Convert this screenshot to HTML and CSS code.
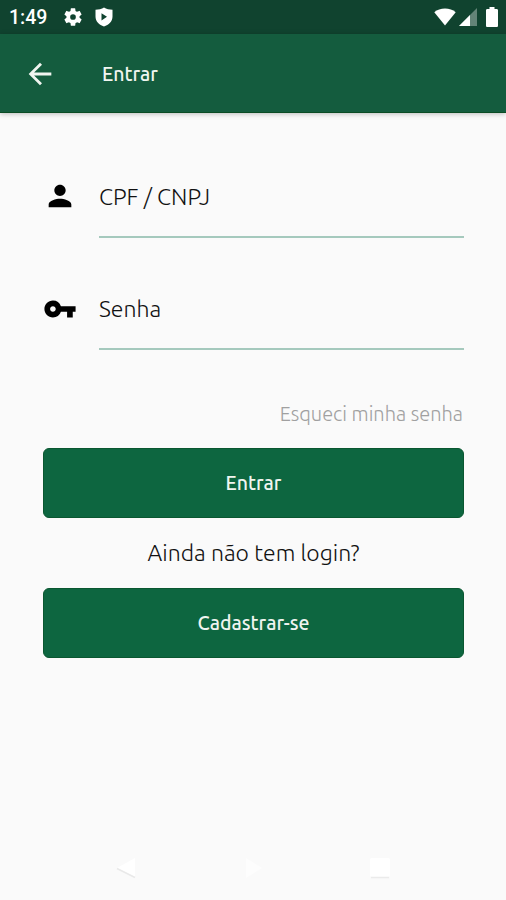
FILE: index.html
```html
<!DOCTYPE html>
<html lang="pt-BR">
<head>
  <meta charset="UTF-8">
  <meta name="viewport" content="width=device-width, initial-scale=1.0">
  <title>Entrar</title>
  <link rel="stylesheet" href="styles.css">
</head>
<body>
  <!-- Status bar -->
  <div class="status-bar">
    <span class="clock">1:49</span>
    <svg class="gear" width="22" height="22" viewBox="0 0 24 24"><path d="M19.14 12.94c.04-.3.06-.61.06-.94s-.02-.64-.07-.94l2.03-1.58a.49.49 0 0 0 .12-.61l-1.92-3.32a.49.49 0 0 0-.59-.22l-2.39.96a7 7 0 0 0-1.62-.94l-.36-2.54a.48.48 0 0 0-.48-.41h-3.84a.47.47 0 0 0-.47.41l-.36 2.54c-.59.24-1.13.57-1.62.94l-2.39-.96a.48.48 0 0 0-.59.22L2.74 8.87a.47.47 0 0 0 .12.61l2.03 1.58a6 6 0 0 0 0 1.88l-2.03 1.58a.49.49 0 0 0-.12.61l1.92 3.32c.12.22.37.29.59.22l2.39-.96c.5.38 1.03.7 1.62.94l.36 2.54c.05.24.24.41.48.41h3.84c.24 0 .44-.17.47-.41l.36-2.54c.59-.24 1.13-.56 1.62-.94l2.39.96c.22.08.47 0 .59-.22l1.92-3.32a.47.47 0 0 0-.12-.61zM12 15.1a3.1 3.1 0 1 1 0-6.2 3.1 3.1 0 0 1 0 6.2z"/></svg>
    <svg class="shield" width="18" height="20" viewBox="0 0 18 20"><path fill-rule="evenodd" d="M9 .5C6.700 2 3.500 2.700.5 2.700V9.500C.5 14.500 4.200 18 9 19.500c4.800-1.500 8.500-5 8.500-10V2.700C14.500 2.700 11.300 2 9 .5zM6.500 6.200l5.500 3.600-5.500 3.600z"/></svg>
    <div class="signals">
      <svg width="22" height="18" viewBox="0 0 22 18"><path d="M11 17.500.3 4.200C3 1.800 7 .5 11 .5s8 1.300 10.700 3.700z"/></svg>
      <svg class="cell" width="18" height="18" viewBox="0 0 18 18"><path d="M0 18 18 0v18z" opacity=".35"/><path d="M0 18 11 7v11z"/></svg>
      <svg class="battery" width="12" height="20" viewBox="0 0 12 20"><path d="M3.500 0h5v2h2.200c.7 0 1.300.6 1.300 1.300v15.400c0 .7-.6 1.300-1.300 1.300H1.300C.6 20 0 19.400 0 18.700V3.300C0 2.600.6 2 1.300 2h2.200z"/></svg>
    </div>
  </div>

  <!-- App bar -->
  <header class="app-bar">
    <svg class="back" width="34" height="34" viewBox="0 0 24 24"><path d="M20 11H7.830l5.590-5.590L12 4l-8 8 8 8 1.410-1.410L7.830 13H20z"/></svg>
    <h1>Entrar</h1>
  </header>

  <main class="login">
    <div class="field">
      <svg class="person" width="34" height="34" viewBox="0 0 24 24"><path d="M12 12c2.210 0 4-1.790 4-4s-1.790-4-4-4-4 1.790-4 4 1.790 4 4 4zm0 2c-2.670 0-8 1.340-8 4v2h16v-2c0-2.660-5.330-4-8-4z"/></svg>
      <div class="input">CPF / CNPJ</div>
    </div>
    <div class="field">
      <svg class="key" width="34" height="34" viewBox="0 0 24 24"><path d="M12.650 10A5.990 5.990 0 0 0 7 6c-3.310 0-6 2.690-6 6s2.690 6 6 6a5.990 5.990 0 0 0 5.650-4H17v4h4v-4h2v-4H12.650zM7 14c-1.100 0-2-.9-2-2s.9-2 2-2 2 .9 2 2-.9 2-2 2z"/></svg>
      <div class="input">Senha</div>
    </div>
    <a class="forgot">Esqueci minha senha</a>
    <button class="btn" type="button">Entrar</button>
    <p class="question">Ainda não tem login?</p>
    <button class="btn" type="button">Cadastrar-se</button>
  </main>

  <!-- System navigation -->
  <nav class="nav-bar">
    <svg width="22" height="24" viewBox="0 0 22 24"><path d="M20 2v19L2 12z" fill="#fff"/><path d="M2 12.500 20 21.500" stroke="#e9e9e9" stroke-width="1.500"/></svg>
    <svg width="22" height="24" viewBox="0 0 22 24"><path d="M4 2v20l16-10z" fill="#fdfdfd"/></svg>
    <svg width="22" height="24" viewBox="0 0 22 24"><rect x="1" y="2" width="20" height="19" rx="2" fill="#fff"/><path d="M2 21.500h18" stroke="#ebebeb" stroke-width="1.500"/></svg>
  </nav>
</body>
</html>
```
FILE: styles.css
```css
:root {
  --status: #10432f;
  --bar: #145c3e;
  --primary: #0d6640;
  --bg: #fafafa;
  --font-family: Ubuntu, "Noto Sans", sans-serif;
}
* { box-sizing: border-box; margin: 0; padding: 0; }
body { display: flex; flex-direction: column; height: 100vh; background-color: var(--bg); color: #111; font-family: var(--font-family); overflow: hidden; }
svg { display: block; flex: none; }

.status-bar { display: flex; align-items: center; flex: none; height: 34px; padding: 0 8px 0 9px; background-color: var(--status); color: #fff; fill: #fff; }
.clock { width: 53px; padding-top: 2px; font: 500 19.5px/34px Roboto, sans-serif; }
.shield { margin-left: 11px; }
.signals { display: flex; align-items: center; margin-left: auto; }
.cell { margin-left: 3px; margin-right: 9px; }

.app-bar { display: flex; align-items: center; flex: none; height: 79px; padding: 1px 0 0 23px; background-color: var(--bar); border-bottom: 1px solid #0b4c24; box-shadow: 0 1px 5px rgba(0,0,0,0.25); color: #f0f5f0; fill: #f0f5f0; }
.app-bar h1 { margin-left: 45px; font-size: 19.5px; font-weight: 500; }

.login { display: flex; flex-direction: column; flex: 1; padding: 45px 42px 0 43px; }
.field { display: flex; align-items: center; height: 80px; margin-bottom: 32px; fill: #000; }
.person { margin-bottom: 4px; }
.key { margin-bottom: 2px; }
.input { flex: 1; height: 80px; margin-left: 22px; border-bottom: 2px solid #a5c9bd; font-size: 23px; font-weight: 300; line-height: 77px; }
.forgot { height: 30px; margin: 17px 1px 19px 0; align-self: flex-end; color: #a0a0a0; font-size: 20px; font-weight: 300; line-height: 30px; }
.btn { flex: none; height: 70px; border: 1px solid #0a5730; border-radius: 6px; background-color: var(--primary); color: #f0f5f0; font-family: inherit; font-size: 19.5px; font-weight: 500; }
.question { height: 70px; font-size: 23px; font-weight: 300; line-height: 70px; text-align: center; }

.nav-bar { display: flex; justify-content: space-between; flex: none; height: 44px; padding: 0 115px; }
```
